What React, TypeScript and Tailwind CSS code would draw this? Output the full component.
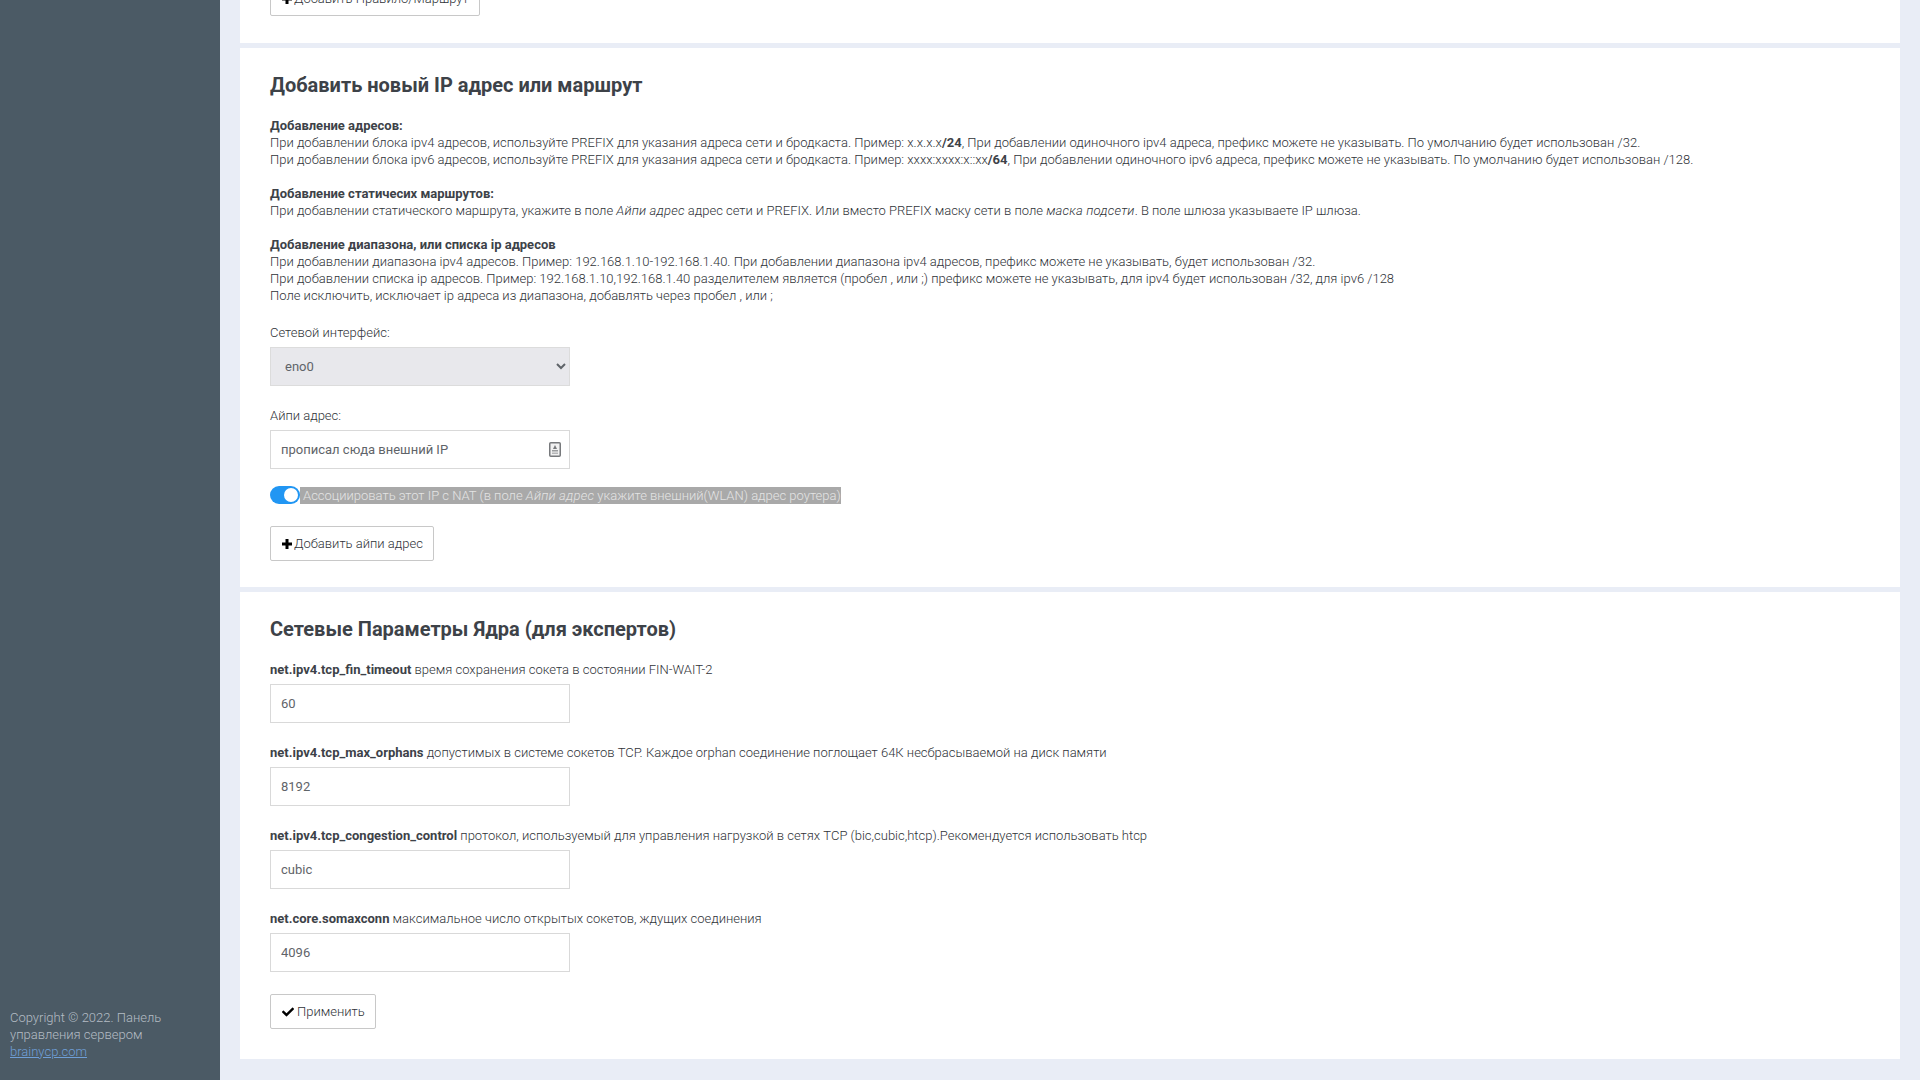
import { FaCheck } from 'react-icons/fa'

const params = [
  { name: 'net.ipv4.tcp_fin_timeout', note: 'время сохранения сокета в состоянии FIN-WAIT-2', value: '60' },
  {
    name: 'net.ipv4.tcp_max_orphans',
    note: 'допустимых в системе сокетов TCP. Каждое orphan соединение поглощает 64К несбрасываемой на диск памяти',
    value: '8192',
  },
  {
    name: 'net.ipv4.tcp_congestion_control',
    note: 'протокол, используемый для управления нагрузкой в сетях TCP (bic,cubic,htcp).Рекомендуется использовать htcp',
    value: 'cubic',
  },
  { name: 'net.core.somaxconn', note: 'максимальное число открытых сокетов, ждущих соединения', value: '4096' },
]

const inputClass =
  'block h-[39px] w-[300px] border border-[#d9d9d9] bg-white px-2.5 text-[13px] font-normal text-[#5f6469] outline-none'
const buttonClass =
  'flex h-[35px] items-center rounded-[2px] border border-[#c8c8c8] bg-white pl-[11px] pr-[10px] text-[13px] font-light text-[#2f3338]'
const boldClass = 'font-bold text-[#3d4248]'
const italicClass = 'tracking-[0.2px]'

function KeyIcon() {
  return (
    <svg width="12" height="15" viewBox="0 0 12 15" className="absolute right-[9px] top-[12px]">
      <rect x="0.75" y="0.75" width="10.5" height="13.5" rx="1" fill="#f1f1f1" stroke="#77797c" strokeWidth="1.5" />
      <path d="M6 3 L8 7 H4 Z" fill="#77797c" />
      <rect x="3" y="8" width="6" height="1.5" fill="#9a9c9e" />
      <rect x="3" y="10.5" width="6" height="1.5" fill="#b5b6b8" />
    </svg>
  )
}

function PlusIcon() {
  return (
    <svg width="10" height="10" viewBox="0 0 10 10" className="mr-[2px] shrink-0">
      <path d="M3.5 0h3v3.5H10v3H6.500V10h-3V6.500H0v-3h3.500z" fill="#000" />
    </svg>
  )
}

export default function App() {
  return (
    <div className="flex h-screen overflow-hidden bg-[#e9edf6] font-['Roboto',sans-serif] text-[13px] leading-[17px] font-light text-[#2f3338]">
      <aside className="flex w-[220px] shrink-0 flex-col justify-end bg-[#4b5a65] px-[10px] pb-[20px] text-[#b4bcc4]">
        <p>Copyright © 2022. Панель управления сервером</p>
        <a href="#" className="text-[#6f9fd8] underline">
          brainycp.com
        </a>
      </aside>

      <main className="flex min-w-0 flex-1 flex-col gap-[5px] pl-5 pr-5">
        <section className="flex h-[43px] shrink-0 items-end overflow-hidden bg-white px-[30px] pb-[27px]">
          <button className={`${buttonClass} shrink-0`}>
            <PlusIcon />
            Добавить Правило/Маршрут
          </button>
        </section>

        <section className="h-[539px] shrink-0 bg-white px-[30px] pt-[25px]">
          <h2 className="mb-[20px] text-[20px] leading-[24px] font-bold text-[#3d4248]">
            Добавить новый IP адрес или маршрут
          </h2>
          <p className="mb-[17px]">
            <b className={boldClass}>Добавление адресов:</b>
            <br />
            При добавлении блока ipv4 адресов, используйте PREFIX для указания адреса сети и бродкаста. Пример: x.x.x.x
            <b className={boldClass}>/24</b>, При добавлении одиночного ipv4 адреса, префикс можете не указывать. По
            умолчанию будет использован /32.
            <br />
            При добавлении блока ipv6 адресов, используйте PREFIX для указания адреса сети и бродкаста. Пример:
            xxxx:xxxx:x::xx<b className={boldClass}>/64</b>, При добавлении одиночного ipv6 адреса, префикс можете не
            указывать. По умолчанию будет использован /128.
          </p>
          <p className="mb-[17px]">
            <b className={boldClass}>Добавление статичесих маршрутов:</b>
            <br />
            При добавлении статического маршрута, укажите в поле <i className={italicClass}>Айпи адрес</i> адрес сети и
            PREFIX. Или вместо PREFIX маску сети в поле <i className={italicClass}>маска подсети</i>. В поле шлюза
            указываете IP шлюза.
          </p>
          <p className="mb-[20px]">
            <b className={boldClass}>Добавление диапазона, или списка ip адресов</b>
            <br />
            При добавлении диапазона ipv4 адресов. Пример: 192.168.1.10-192.168.1.40. При добавлении диапазона ipv4
            адресов, префикс можете не указывать, будет использован /32.
            <br />
            При добавлении списка ip адресов. Пример: 192.168.1.10,192.168.1.40 разделителем является (пробел , или ;)
            префикс можете не указывать, для ipv4 будет использован /32, для ipv6 /128
            <br />
            Поле исключить, исключает ip адреса из диапазона, добавлять через пробел , или ;
          </p>

          <label className="mb-[6px] block">Сетевой интерфейс:</label>
          <select className="mb-[21px] block h-[39px] w-[300px] border border-[#dcdcdc] bg-[#e8e8ec] pl-[10px] text-[13px] font-normal text-[#5f6469] outline-none">
            <option>eno0</option>
          </select>

          <label className="mb-[6px] block">Айпи адрес:</label>
          <div className="relative mb-[17px] w-[300px]">
            <input className={inputClass} defaultValue="прописал сюда внешний IP" />
            <KeyIcon />
          </div>

          <div className="mb-[22px] flex items-center">
            <span className="relative h-[18px] w-[30px] rounded-full bg-[#2196f3]">
              <span className="absolute right-[2px] top-[2px] size-[14px] rounded-full bg-white" />
            </span>
            <span className="bg-[#a9a9a9] pl-[3px] text-[#e4e4e4]">
              Ассоциировать этот IP с NAT (в поле <i className={italicClass}>Айпи адрес</i> укажите внешний(WLAN) адрес
              роутера)
            </span>
          </div>

          <button className={buttonClass}>
            <PlusIcon />
            Добавить айпи адрес
          </button>
        </section>

        <section className="h-[467px] shrink-0 bg-white px-[30px] pt-[25px]">
          <h2 className="mb-[20px] text-[20px] leading-[24px] font-bold text-[#3d4248]">
            Сетевые Параметры Ядра (для экспертов)
          </h2>
          <div className="flex flex-col gap-[21px]">
            {params.map((p) => (
              <div key={p.name}>
                <label className="mb-[6px] block">
                  <b className={boldClass}>{p.name}</b> {p.note}
                </label>
                <input className={inputClass} defaultValue={p.value} />
              </div>
            ))}
          </div>
          <button className={`${buttonClass} mt-[22px]`}>
            <FaCheck className="mr-[3px] size-[12px] text-black" />
            Применить
          </button>
        </section>
      </main>
    </div>
  )
}
